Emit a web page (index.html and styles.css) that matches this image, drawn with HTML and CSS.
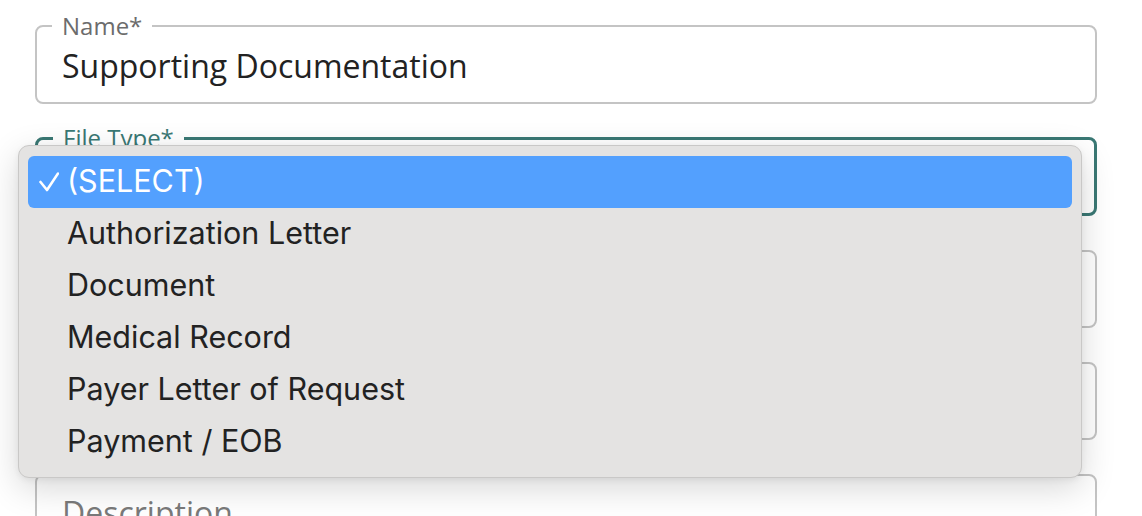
FILE: index.html
```html
<!DOCTYPE html>
<html lang="en">
<head>
<meta charset="utf-8">
<title>File form</title>
<link rel="stylesheet" href="styles.css">
</head>
<body>
<main class="form">
  <fieldset class="field">
    <legend class="field-label">Name*</legend>
    <div class="field-value">Supporting Documentation</div>
  </fieldset>
  <fieldset class="field field-focused">
    <legend class="field-label">File Type*</legend>
    <div class="field-value"></div>
  </fieldset>
  <fieldset class="field field-plain">
    <div class="field-value"></div>
  </fieldset>
  <fieldset class="field field-plain">
    <div class="field-value"></div>
  </fieldset>
  <fieldset class="field field-plain">
    <div class="field-value field-placeholder">Description</div>
  </fieldset>
</main>

<div class="menu" role="listbox">
  <div class="menu-item menu-item-selected" role="option">
    <svg class="check" viewBox="0 0 20 20" width="20" height="20" aria-hidden="true"><polyline points="1.5,10 8,18 19,1.5" fill="none" stroke="#fff" stroke-width="2.6" stroke-linecap="round" stroke-linejoin="round"/></svg>
    <span>(SELECT)</span>
  </div>
  <div class="menu-item" role="option"><span>Authorization Letter</span></div>
  <div class="menu-item" role="option"><span>Document</span></div>
  <div class="menu-item" role="option"><span>Medical Record</span></div>
  <div class="menu-item" role="option"><span>Payer Letter of Request</span></div>
  <div class="menu-item" role="option"><span>Payment / EOB</span></div>
</div>
</body>
</html>
```

FILE: styles.css
```css
html, body {
  margin: 0;
  padding: 0;
  background: #ffffff;
  height: 516px;
  overflow: hidden;
}

.form {
  display: grid;
  grid-auto-rows: 90px;
  row-gap: 22px;
  padding: 14px 45px 0 35px;
  font-family: "Open Sans", "Noto Sans", sans-serif;
}

.field {
  box-sizing: border-box;
  height: 90px;
  margin: 0;
  padding: 0 0 0 25px;
  border: 2px solid #c4c4c4;
  border-radius: 8px;
  min-width: 0;
  align-self: end;
}

.field-label {
  margin-left: -10px;
  padding: 0 10px;
  font-size: 24px;
  line-height: 24px;
  color: #6c6c6c;
}

.field-value {
  font-size: 32px;
  line-height: 56px;
  color: #222222;
  white-space: nowrap;
}

.field-plain {
  height: 78px;
}

.field-plain .field-value {
  line-height: 74px;
}

.field-placeholder {
  color: #7a7a7a;
}

.field-focused {
  border: 3px solid #3a7874;
  padding-left: 24px;
}

.field-focused .field-label {
  color: #3a7874;
  margin-left: -9px;
}

.menu {
  position: absolute;
  left: 18px;
  top: 145px;
  width: 1064px;
  height: 333px;
  box-sizing: border-box;
  padding: 10px 9px;
  background: #e4e3e2;
  border: 1px solid #c9c8c7;
  border-radius: 11px;
  box-shadow: 0 10px 34px rgba(0, 0, 0, 0.16), 0 2px 6px rgba(0, 0, 0, 0.06);
  font-family: "Inter", "Liberation Sans", sans-serif;
  font-size: 30.5px;
  color: #222222;
  display: flex;
  flex-direction: column;
}

.menu-item {
  box-sizing: border-box;
  height: 52px;
  flex: none;
  display: flex;
  align-items: center;
  padding-left: 39px;
  padding-bottom: 3px;
  border-radius: 6px;
}

.menu-item-selected {
  background: #53a0fe;
  color: #ffffff;
  padding-left: 11px;
  gap: 8px;
}

.check {
  width: 20px;
  height: 20px;
  flex: none;
  margin-top: 2px;
}
```
